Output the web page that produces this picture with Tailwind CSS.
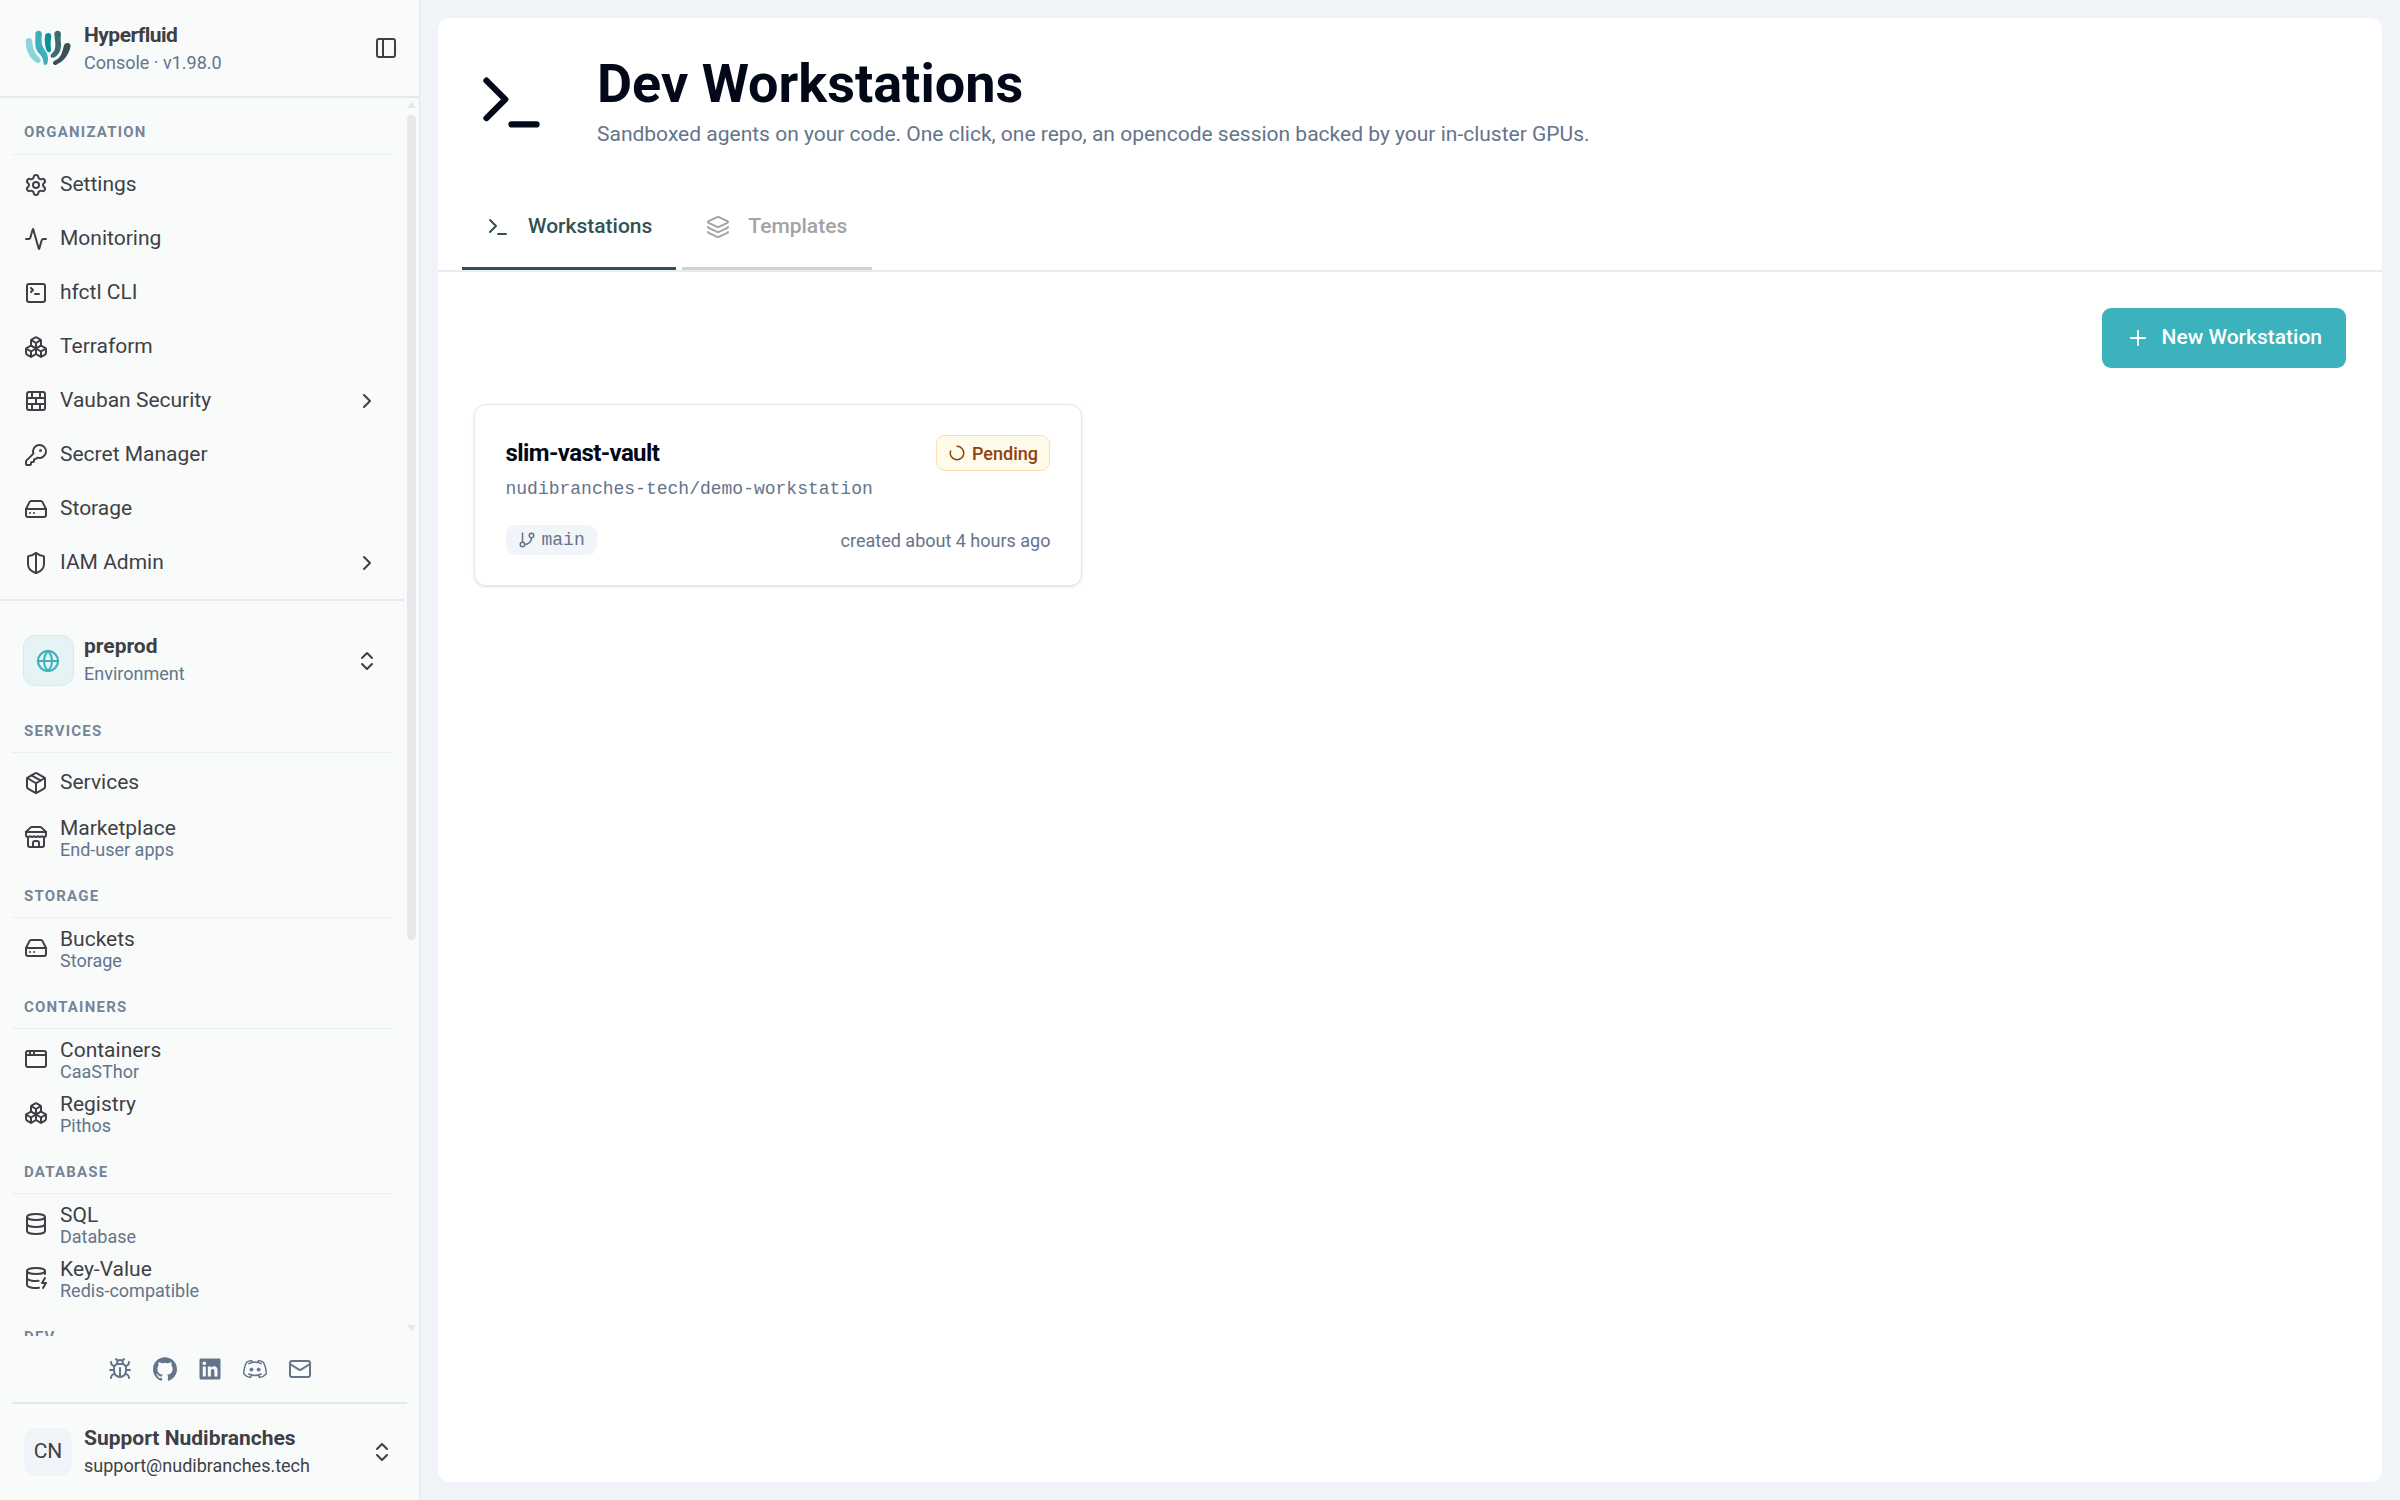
<!DOCTYPE html>
<html lang="en">
<head>
    <meta charset="UTF-8">
    <meta name="viewport" content="width=device-width, initial-scale=1.0">
    <title>Dev Workstations | Hyperfluid Console</title>
    <script src="https://cdn.jsdelivr.net/npm/@tailwindcss/browser@4"></script>
</head>
<body class="bg-[#f0f4f9] font-[Roboto,sans-serif] text-[21px] text-[#3f3f46] antialiased">
    <!-- Shared icons -->
    <svg class="hidden">
        <symbol id="chevron-right" viewBox="0 0 24 24"><path d="m9 18 6-6-6-6"/></symbol>
        <symbol id="chevrons" viewBox="0 0 24 24"><path d="m7 15 5 5 5-5"/><path d="m7 9 5-5 5 5"/></symbol>
        <symbol id="terminal" viewBox="0 0 24 24"><path d="m4 17 6-6-6-6"/><path d="M12 19h8"/></symbol>
        <symbol id="hard-drive" viewBox="0 0 24 24"><path d="M22 12H2"/><path d="M5.45 5.11 2 12v6a2 2 0 0 0 2 2h16a2 2 0 0 0 2-2v-6l-3.45-6.89A2 2 0 0 0 16.76 4H7.24a2 2 0 0 0-1.79 1.11z"/><path d="M6 16h.01"/><path d="M10 16h.01"/></symbol>
        <symbol id="boxes" viewBox="0 0 24 24"><path d="M2.97 12.92A2 2 0 0 0 2 14.63v3.24a2 2 0 0 0 .97 1.71l3 1.8a2 2 0 0 0 2.06 0L12 19v-5.5l-5-3-4.03 2.42Z"/><path d="m7 16.5-4.74-2.85"/><path d="m7 16.5 5-3"/><path d="M7 16.5v5.17"/><path d="M12 13.5V19l3.97 2.38a2 2 0 0 0 2.06 0l3-1.8a2 2 0 0 0 .97-1.71v-3.24a2 2 0 0 0-.97-1.71L17 10.5l-5 3Z"/><path d="m17 16.5-5-3"/><path d="m17 16.5 4.74-2.85"/><path d="M17 16.5v5.17"/><path d="M7.97 4.42A2 2 0 0 0 7 6.13v4.37l5 3 5-3V6.13a2 2 0 0 0-.97-1.71l-3-1.8a2 2 0 0 0-2.06 0l-3 1.8Z"/><path d="M12 8 7.26 5.15"/><path d="m12 8 4.74-2.85"/><path d="M12 13.5V8"/></symbol>
    </svg>

    <div class="flex h-screen overflow-hidden">
        <!-- Sidebar -->
        <aside class="flex w-[420px] shrink-0 flex-col border-r border-[#dfe7f1] bg-[#f9fbfb]">
            <!-- Brand -->
            <div class="flex h-[98px] shrink-0 items-center border-b-2 border-[#e2e9f1] pr-[21.5px] pl-6">
                <svg class="h-[38px] w-12 shrink-0" viewBox="72 87 144 114">
                    <path fill="#8dd4da" d="M77 123c0-6 4-9 10-9s9 4 10 10c1 23 8 38 22 50 5 5 4 11-1 14-3 2-7 1-11-2-19-13-30-35-30-63Z"/>
                    <path fill="#3eb0bb" d="M106 101c0-5 4-9 10-9s10 4 10 10c-1 10-2 22 0 31 3 15 18 22 18 45 0 10-3 17-7 17-5 0-7-3-7-9 0-23-23-25-24-51-1-12 1-22 0-34Z"/>
                    <path fill="#08929c" d="M135 108c0-5 4-9 10-9s10 5 9 11c-2 14-3 22-1 34 1 8-1 13-5 13-5 0-8-4-10-11-4-13-4-25-3-38Z"/>
                    <path fill="#3b6c70" d="M163 101c0-5 4-9 10-9s10 4 10 10c-2 11-1 20 0 29 1 20-8 37-23 42-6 2-10-2-8-7 2-6 9-9 12-17 5-13 0-32-1-48Z"/>
                    <path fill="#3a5054" d="M192 136c2-6 7-8 13-7 6 2 8 6 6 13-5 22-20 44-42 52-6 2-11-1-10-6 2-7 14-8 22-20 7-10 7-20 11-32Z"/>
                </svg>
                <div class="ml-3 flex-1 pb-px">
                    <div class="mb-px text-[21px] leading-[30px] font-bold tracking-tight">Hyperfluid</div>
                    <div class="text-[18px] leading-6 text-[#64748b]">Console · v1.98.0</div>
                </div>
                <svg class="size-6" viewBox="0 0 24 24" fill="none" stroke="currentColor" stroke-width="2" stroke-linecap="round" stroke-linejoin="round"><rect width="18" height="18" x="3" y="3" rx="2"/><path d="M9 3v18"/></svg>
            </div>

            <!-- Navigation -->
            <div class="flex h-[1238px] shrink-0 overflow-hidden">
                <nav class="w-[404px] shrink-0 pt-[3px]">
                    <section class="px-3">
                        <h2 class="mb-[3px] flex h-[54px] items-center border-b border-[#eceff1] pt-[10px] pl-3 text-[15px] font-bold tracking-[1.2px] text-[#64748b]/90 uppercase">Organization</h2>
                        <ul>
                            <li><a href="#" class="flex h-[54px] items-center gap-3 px-3">
                                <svg class="size-6" viewBox="0 0 24 24" fill="none" stroke="currentColor" stroke-width="2" stroke-linecap="round" stroke-linejoin="round"><path d="M9.671 4.136a2.34 2.34 0 0 1 4.659 0 2.34 2.34 0 0 0 3.319 1.915 2.34 2.34 0 0 1 2.33 4.033 2.34 2.34 0 0 0 0 3.831 2.34 2.34 0 0 1-2.33 4.033 2.34 2.34 0 0 0-3.319 1.915 2.34 2.34 0 0 1-4.659 0 2.34 2.34 0 0 0-3.32-1.915 2.34 2.34 0 0 1-2.33-4.033 2.34 2.34 0 0 0 0-3.831A2.34 2.34 0 0 1 6.35 6.051a2.34 2.34 0 0 0 3.319-1.915"/><circle cx="12" cy="12" r="3"/></svg>
                                <span>Settings</span>
                            </a></li>
                            <li><a href="#" class="flex h-[54px] items-center gap-3 px-3">
                                <svg class="size-6" viewBox="0 0 24 24" fill="none" stroke="currentColor" stroke-width="2" stroke-linecap="round" stroke-linejoin="round"><path d="M22 12h-2.48a2 2 0 0 0-1.93 1.46l-2.35 8.36a.25.25 0 0 1-.48 0L9.24 2.18a.25.25 0 0 0-.48 0l-2.35 8.36A2 2 0 0 1 4.49 12H2"/></svg>
                                <span>Monitoring</span>
                            </a></li>
                            <li><a href="#" class="flex h-[54px] items-center gap-3 px-3">
                                <svg class="size-6" viewBox="0 0 24 24" fill="none" stroke="currentColor" stroke-width="2" stroke-linecap="round" stroke-linejoin="round"><path d="m7 11 2-2-2-2"/><path d="M11 13h4"/><rect width="18" height="18" x="3" y="3" rx="2"/></svg>
                                <span>hfctl CLI</span>
                            </a></li>
                            <li><a href="#" class="flex h-[54px] items-center gap-3 px-3">
                                <svg class="size-6" fill="none" stroke="currentColor" stroke-width="2" stroke-linecap="round" stroke-linejoin="round"><use href="#boxes"/></svg>
                                <span>Terraform</span>
                            </a></li>
                            <li><a href="#" class="flex h-[54px] items-center gap-3 pr-[13px] pl-3">
                                <svg class="size-6" viewBox="0 0 24 24" fill="none" stroke="currentColor" stroke-width="2" stroke-linecap="round" stroke-linejoin="round"><rect width="18" height="18" x="3" y="3" rx="2"/><path d="M12 9v6"/><path d="M16 15v6"/><path d="M16 3v6"/><path d="M3 15h18"/><path d="M3 9h18"/><path d="M8 15v6"/><path d="M8 3v6"/></svg>
                                <span>Vauban Security</span>
                                <svg class="ml-auto size-6" fill="none" stroke="currentColor" stroke-width="2" stroke-linecap="round" stroke-linejoin="round"><use href="#chevron-right"/></svg>
                            </a></li>
                            <li><a href="#" class="flex h-[54px] items-center gap-3 px-3">
                                <svg class="size-6" viewBox="0 0 24 24" fill="none" stroke="currentColor" stroke-width="2" stroke-linecap="round" stroke-linejoin="round"><path d="M2.586 17.414A2 2 0 0 0 2 18.828V21a1 1 0 0 0 1 1h3a1 1 0 0 0 1-1v-1a1 1 0 0 1 1-1h1a1 1 0 0 0 1-1v-1a1 1 0 0 1 1-1h.172a2 2 0 0 0 1.414-.586l.814-.814a6.5 6.5 0 1 0-4-4z"/><circle cx="16.5" cy="7.5" r=".5" fill="currentColor"/></svg>
                                <span>Secret Manager</span>
                            </a></li>
                            <li><a href="#" class="flex h-[54px] items-center gap-3 px-3">
                                <svg class="size-6" fill="none" stroke="currentColor" stroke-width="2" stroke-linecap="round" stroke-linejoin="round"><use href="#hard-drive"/></svg>
                                <span>Storage</span>
                            </a></li>
                            <li><a href="#" class="flex h-[54px] items-center gap-3 pr-[13px] pl-3">
                                <svg class="size-6" viewBox="0 0 24 24" fill="none" stroke="currentColor" stroke-width="2" stroke-linecap="round" stroke-linejoin="round"><path d="M20 13c0 5-3.5 7.5-7.66 8.95a1 1 0 0 1-.67-.01C7.5 20.5 4 18 4 13V6a1 1 0 0 1 1-1c2 0 4.5-1.2 6.24-2.72a1.17 1.17 0 0 1 1.52 0C14.51 3.81 17 5 19 5a1 1 0 0 1 1 1z"/><path d="M12 22V2"/></svg>
                                <span>IAM Admin</span>
                                <svg class="ml-auto size-6" fill="none" stroke="currentColor" stroke-width="2" stroke-linecap="round" stroke-linejoin="round"><use href="#chevron-right"/></svg>
                            </a></li>
                        </ul>
                    </section>

                    <!-- Environment switcher -->
                    <div class="mt-[9px] flex h-[100px] items-center border-t-2 border-[#e8eaed] pt-[21px] pr-[25px] pl-[22.5px]">
                        <div class="flex size-[51px] items-center justify-center rounded-xl border border-[#d3ecee] bg-[#e6f3f4] text-[#3cb1bb]">
                            <svg class="size-6" viewBox="0 0 24 24" fill="none" stroke="currentColor" stroke-width="2" stroke-linecap="round" stroke-linejoin="round"><circle cx="12" cy="12" r="10"/><path d="M12 2a14.5 14.5 0 0 0 0 20 14.5 14.5 0 0 0 0-20"/><path d="M2 12h20"/></svg>
                        </div>
                        <div class="ml-[10.5px] flex-1 pb-1">
                            <div class="mb-[1.5px] leading-[30px] font-bold">preprod</div>
                            <div class="text-[18px] leading-6 text-[#64748b]">Environment</div>
                        </div>
                        <svg class="size-6" fill="none" stroke="currentColor" stroke-width="2" stroke-linecap="round" stroke-linejoin="round"><use href="#chevrons"/></svg>
                    </div>

                    <section class="px-3">
                        <h2 class="mb-[3px] flex h-[54px] items-center border-b border-[#eceff1] pt-[11px] pl-3 text-[15px] font-bold tracking-[1.2px] text-[#64748b]/90 uppercase">Services</h2>
                        <ul>
                            <li><a href="#" class="flex h-[54px] items-center gap-3 px-3">
                                <svg class="size-6" viewBox="0 0 24 24" fill="none" stroke="currentColor" stroke-width="2" stroke-linecap="round" stroke-linejoin="round"><path d="M11 21.73a2 2 0 0 0 2 0l7-4A2 2 0 0 0 21 16V8a2 2 0 0 0-1-1.73l-7-4a2 2 0 0 0-2 0l-7 4A2 2 0 0 0 3 8v8a2 2 0 0 0 1 1.73z"/><path d="M12 22V12"/><path d="m3.3 7 7.703 4.734a2 2 0 0 0 1.994 0L20.7 7"/><path d="m7.5 4.27 9 5.15"/></svg>
                                <span>Services</span>
                            </a></li>
                            <li><a href="#" class="flex h-[54px] items-center gap-3 px-3">
                                <svg class="size-6" viewBox="0 0 24 24" fill="none" stroke="currentColor" stroke-width="2" stroke-linecap="round" stroke-linejoin="round"><path d="m2 7 4.41-4.41A2 2 0 0 1 7.83 2h8.34a2 2 0 0 1 1.42.59L22 7"/><path d="M4 12v8a2 2 0 0 0 2 2h12a2 2 0 0 0 2-2v-8"/><path d="M15 22v-4a2 2 0 0 0-2-2h-2a2 2 0 0 0-2 2v4"/><path d="M2 7h20"/><path d="M22 7v3a2 2 0 0 1-2 2a2.7 2.7 0 0 1-1.59-.63.7.7 0 0 0-.82 0A2.7 2.7 0 0 1 16 12a2.7 2.7 0 0 1-1.59-.63.7.7 0 0 0-.82 0A2.7 2.7 0 0 1 12 12a2.7 2.7 0 0 1-1.59-.63.7.7 0 0 0-.82 0A2.7 2.7 0 0 1 8 12a2.7 2.7 0 0 1-1.59-.63.7.7 0 0 0-.82 0A2.7 2.7 0 0 1 4 12a2 2 0 0 1-2-2V7"/></svg>
                                <span class="flex flex-col leading-tight">Marketplace<small class="text-[18px] leading-none text-[#64748b]">End-user apps</small></span>
                            </a></li>
                        </ul>
                    </section>

                    <section class="px-3">
                        <h2 class="mb-[3px] flex h-[54px] items-center border-b border-[#eceff1] pt-[11px] pl-3 text-[15px] font-bold tracking-[1.2px] text-[#64748b]/90 uppercase">Storage</h2>
                        <ul>
                            <li><a href="#" class="flex h-[54px] items-center gap-3 px-3">
                                <svg class="size-6" fill="none" stroke="currentColor" stroke-width="2" stroke-linecap="round" stroke-linejoin="round"><use href="#hard-drive"/></svg>
                                <span class="flex flex-col leading-tight">Buckets<small class="text-[18px] leading-none text-[#64748b]">Storage</small></span>
                            </a></li>
                        </ul>
                    </section>

                    <section class="px-3">
                        <h2 class="mb-[3px] flex h-[54px] items-center border-b border-[#eceff1] pt-[11px] pl-3 text-[15px] font-bold tracking-[1.2px] text-[#64748b]/90 uppercase">Containers</h2>
                        <ul>
                            <li><a href="#" class="flex h-[54px] items-center gap-3 px-3">
                                <svg class="size-6" viewBox="0 0 24 24" fill="none" stroke="currentColor" stroke-width="2" stroke-linecap="round" stroke-linejoin="round"><rect x="2" y="4" width="20" height="16" rx="2"/><path d="M10 4v4"/><path d="M2 8h20"/><path d="M6 4v4"/></svg>
                                <span class="flex flex-col leading-tight">Containers<small class="text-[18px] leading-none text-[#64748b]">CaaSThor</small></span>
                            </a></li>
                            <li><a href="#" class="flex h-[54px] items-center gap-3 px-3">
                                <svg class="size-6" fill="none" stroke="currentColor" stroke-width="2" stroke-linecap="round" stroke-linejoin="round"><use href="#boxes"/></svg>
                                <span class="flex flex-col leading-tight">Registry<small class="text-[18px] leading-none text-[#64748b]">Pithos</small></span>
                            </a></li>
                        </ul>
                    </section>

                    <section class="px-3">
                        <h2 class="mb-[3px] flex h-[54px] items-center border-b border-[#eceff1] pt-[11px] pl-3 text-[15px] font-bold tracking-[1.2px] text-[#64748b]/90 uppercase">Database</h2>
                        <ul>
                            <li><a href="#" class="flex h-[54px] items-center gap-3 px-3">
                                <svg class="size-6" viewBox="0 0 24 24" fill="none" stroke="currentColor" stroke-width="2" stroke-linecap="round" stroke-linejoin="round"><ellipse cx="12" cy="5" rx="9" ry="3"/><path d="M3 5V19A9 3 0 0 0 21 19V5"/><path d="M3 12A9 3 0 0 0 21 12"/></svg>
                                <span class="flex flex-col leading-tight">SQL<small class="text-[18px] leading-none text-[#64748b]">Database</small></span>
                            </a></li>
                            <li><a href="#" class="flex h-[54px] items-center gap-3 px-3">
                                <svg class="size-6" viewBox="0 0 24 24" fill="none" stroke="currentColor" stroke-width="2" stroke-linecap="round" stroke-linejoin="round"><ellipse cx="12" cy="5" rx="9" ry="3"/><path d="M3 5V19A9 3 0 0 0 15 21.84"/><path d="M21 5V8"/><path d="M21 12L18 17H22L19 22"/><path d="M3 12A9 3 0 0 0 14.59 14.87"/></svg>
                                <span class="flex flex-col leading-tight">Key-Value<small class="text-[18px] leading-none text-[#64748b]">Redis-compatible</small></span>
                            </a></li>
                        </ul>
                    </section>

                    <section class="px-3">
                        <h2 class="mb-[3px] flex h-[54px] items-center border-b border-[#eceff1] pt-[11px] pl-3 text-[15px] font-bold tracking-[1.2px] text-[#64748b]/90 uppercase">Dev</h2>
                    </section>
                </nav>

                <!-- Scrollbar -->
                <div class="flex w-[15px] flex-col items-center pt-1 pb-[5px] text-[#e5e7eb]">
                    <svg class="h-[6px] w-[9px]" viewBox="0 0 9 6" fill="currentColor"><path d="M4.5 0 9 6H0z"/></svg>
                    <div class="mt-[7px] h-[825px] w-[9px] rounded-full bg-[#e5e7eb]"></div>
                    <svg class="mt-auto h-[6px] w-[9px]" viewBox="0 0 9 6" fill="currentColor"><path d="M4.5 6 9 0H0z"/></svg>
                </div>
            </div>

            <!-- Links -->
            <div class="mr-3 ml-3 flex h-[68px] shrink-0 items-center justify-center gap-[21px] border-b-2 border-[#e2e8f0] text-[#64748b]">
                <svg class="size-6" viewBox="0 0 24 24" fill="none" stroke="currentColor" stroke-width="2" stroke-linecap="round" stroke-linejoin="round"><path d="m8 2 1.88 1.88"/><path d="M14.12 3.88 16 2"/><path d="M9 7.13v-1a3.003 3.003 0 1 1 6 0v1"/><path d="M12 20c-3.3 0-6-2.7-6-6v-3a4 4 0 0 1 4-4h4a4 4 0 0 1 4 4v3c0 3.3-2.7 6-6 6"/><path d="M12 20v-9"/><path d="M6.53 9C4.6 8.8 3 7.1 3 5"/><path d="M6 13H2"/><path d="M3 21c0-2.1 1.7-3.9 3.8-4"/><path d="M20.97 5c0 2.1-1.6 3.8-3.5 4"/><path d="M22 13h-4"/><path d="M17.2 17c2.1.1 3.8 1.9 3.8 4"/></svg>
                <svg class="size-6" viewBox="0 0 24 24" fill="currentColor"><path d="M12 .297c-6.63 0-12 5.373-12 12 0 5.303 3.438 9.8 8.205 11.385.6.113.82-.258.82-.577 0-.285-.01-1.04-.015-2.04-3.338.724-4.042-1.61-4.042-1.61C4.422 18.07 3.633 17.7 3.633 17.7c-1.087-.744.084-.729.084-.729 1.205.084 1.838 1.236 1.838 1.236 1.07 1.835 2.809 1.305 3.495.998.108-.776.417-1.305.76-1.605-2.665-.3-5.466-1.332-5.466-5.93 0-1.31.465-2.38 1.235-3.22-.135-.303-.54-1.523.105-3.176 0 0 1.005-.322 3.3 1.23.96-.267 1.98-.399 3-.405 1.02.006 2.04.138 3 .405 2.28-1.552 3.285-1.23 3.285-1.23.645 1.653.24 2.873.12 3.176.765.84 1.23 1.91 1.23 3.22 0 4.61-2.805 5.625-5.475 5.92.42.36.81 1.096.81 2.22 0 1.606-.015 2.896-.015 3.286 0 .315.21.69.825.57C20.565 22.092 24 17.592 24 12.297c0-6.627-5.373-12-12-12"/></svg>
                <svg class="size-6" viewBox="0 0 448 512" fill="currentColor"><path d="M416 32H31.9C14.3 32 0 46.5 0 64.3v383.4C0 465.5 14.3 480 31.9 480H416c17.6 0 32-14.5 32-32.3V64.3c0-17.8-14.4-32.3-32-32.3zM135.4 416H69V202.2h66.5V416zm-33.2-243c-21.3 0-38.5-17.3-38.5-38.5S80.9 96 102.2 96c21.2 0 38.5 17.3 38.5 38.5 0 21.3-17.2 38.5-38.5 38.5zm282.1 243h-66.4V312c0-24.8-.5-56.7-34.5-56.7-34.6 0-39.9 27-39.9 54.9V416h-66.4V202.2h63.7v29.2h.9c8.9-16.8 30.6-34.5 62.9-34.5 67.2 0 79.7 44.3 79.7 101.9V416z"/></svg>
                <svg class="size-6" viewBox="0 0 24 24" fill="none" stroke="currentColor" stroke-width="1.5" stroke-linecap="round" stroke-linejoin="round"><path d="M9.3 5.2 8.6 3.6C6.8 3.9 5.2 4.4 3.8 5.2 1.8 8.4.8 12.2.8 17c1.7 1.9 3.9 3 6.6 3.4l1.4-2.3"/><path d="m14.7 5.2.7-1.6c1.8.3 3.4.8 4.8 1.6 2 3.2 3 7 3 11.8-1.7 1.9-3.9 3-6.6 3.4l-1.4-2.3"/><path d="M5.8 6.6c4-1.9 8.4-1.9 12.4 0"/><path d="M5.8 17c4 1.9 8.4 1.9 12.4 0"/><circle cx="8.4" cy="12.6" r="1.5" fill="currentColor" stroke-width="1"/><circle cx="15.6" cy="12.6" r="1.5" fill="currentColor" stroke-width="1"/></svg>
                <svg class="size-6" viewBox="0 0 24 24" fill="none" stroke="currentColor" stroke-width="2" stroke-linecap="round" stroke-linejoin="round"><rect width="20" height="16" x="2" y="4" rx="2"/><path d="m22 7-8.97 5.7a1.94 1.94 0 0 1-2.06 0L2 7"/></svg>
            </div>

            <!-- User -->
            <div class="flex flex-1 items-center pr-[25px] pl-6">
                <div class="flex size-12 items-center justify-center rounded-xl bg-[#f1f5f9]">CN</div>
                <div class="ml-3 flex-1 pb-[3px]">
                    <div class="mb-px leading-[30px] font-bold">Support Nudibranches</div>
                    <div class="text-[18px] leading-6">support@nudibranches.tech</div>
                </div>
                <svg class="size-6" fill="none" stroke="currentColor" stroke-width="2" stroke-linecap="round" stroke-linejoin="round"><use href="#chevrons"/></svg>
            </div>
        </aside>

        <!-- Main Content -->
        <main class="m-[18px] flex-1 overflow-hidden rounded-xl bg-white text-[#020817]">
            <header class="flex h-[167px] items-center pt-px pl-9">
                <svg class="size-[75px]" fill="none" stroke="currentColor" stroke-width="2" stroke-linecap="round" stroke-linejoin="round"><use href="#terminal"/></svg>
                <div class="ml-12 pb-[2px]">
                    <h1 class="text-[54px] leading-[60px] font-bold">Dev Workstations</h1>
                    <p class="mt-[5px] leading-[30px] text-[#64748b]">Sandboxed agents on your code. One click, one repo, an opencode session backed by your in-cluster GPUs.</p>
                </div>
            </header>

            <!-- Tabs -->
            <div class="flex h-[87px] gap-[6px] border-b-2 border-[#e6ebf2] pl-6 font-medium">
                <a href="#" class="flex items-center gap-[18px] border-b-[3px] border-[#335154] pt-[2px] pr-6 pl-6 text-[#335154]">
                    <svg class="size-6" fill="none" stroke="currentColor" stroke-width="2" stroke-linecap="round" stroke-linejoin="round"><use href="#terminal"/></svg>
                    Workstations
                </a>
                <a href="#" class="flex items-center gap-[18px] border-b-[3px] border-[#d1d3d1] pt-[2px] pr-[24.5px] pl-6 text-[#a3a3a3]">
                    <svg class="size-6" viewBox="0 0 24 24" fill="none" stroke="currentColor" stroke-width="2" stroke-linecap="round" stroke-linejoin="round"><path d="M12.83 2.18a2 2 0 0 0-1.66 0L2.6 6.08a1 1 0 0 0 0 1.83l8.58 3.91a2 2 0 0 0 1.66 0l8.58-3.9a1 1 0 0 0 0-1.83z"/><path d="M2 12a1 1 0 0 0 .58.91l8.6 3.91a2 2 0 0 0 1.65 0l8.58-3.9A1 1 0 0 0 22 12"/><path d="M2 17a1 1 0 0 0 .58.91l8.6 3.91a2 2 0 0 0 1.65 0l8.58-3.9A1 1 0 0 0 22 17"/></svg>
                    Templates
                </a>
            </div>

            <div class="px-9 pt-[35.5px]">
                <div class="flex justify-end">
                    <button class="flex h-[60px] items-center gap-3 rounded-[9px] bg-[#3bb2bc] px-6 font-medium text-white">
                        <svg class="size-6" viewBox="0 0 24 24" fill="none" stroke="currentColor" stroke-width="2" stroke-linecap="round" stroke-linejoin="round"><path d="M5 12h14"/><path d="M12 5v14"/></svg>
                        New Workstation
                    </button>
                </div>

                <!-- Workstation cards -->
                <div class="mt-9 grid grid-cols-3 gap-6">
                    <div class="h-[182.5px] rounded-xl border border-[#dfe6f0] px-[30.5px] pt-[30.5px] shadow-sm">
                        <div class="flex items-start justify-between">
                            <div>
                                <h3 class="text-[24px] leading-9 font-bold tracking-tight">slim-vast-vault</h3>
                                <p class="mt-[6px] font-['Liberation_Mono',monospace] text-[18px] leading-6 text-[#64748b]">nudibranches-tech/demo-workstation</p>
                            </div>
                            <span class="mr-[0.5px] flex h-9 items-center gap-[6px] rounded-[9px] border border-[#fbdfb0] bg-[#fffbeb] px-[11px] text-[18px] font-medium text-[#92400e]">
                                <svg class="size-[18px] -rotate-90" viewBox="0 0 24 24" fill="none" stroke="currentColor" stroke-width="2" stroke-linecap="round" stroke-linejoin="round"><path d="M21 12a9 9 0 1 1-6.219-8.56"/></svg>
                                Pending
                            </span>
                        </div>
                        <div class="mt-6 flex items-center justify-between text-[18px] text-[#64748b]">
                            <span class="flex h-[30px] items-center gap-[6px] rounded-[9px] bg-[#f1f5f9] px-3 font-['Liberation_Mono',monospace]">
                                <svg class="size-[18px]" viewBox="0 0 24 24" fill="none" stroke="currentColor" stroke-width="2" stroke-linecap="round" stroke-linejoin="round"><path d="M6 3v12"/><circle cx="18" cy="6" r="3"/><circle cx="6" cy="18" r="3"/><path d="M18 9a9 9 0 0 1-9 9"/></svg>
                                main
                            </span>
                            <span>created about 4 hours ago</span>
                        </div>
                    </div>
                </div>
            </div>
        </main>
    </div>
</body>
</html>
